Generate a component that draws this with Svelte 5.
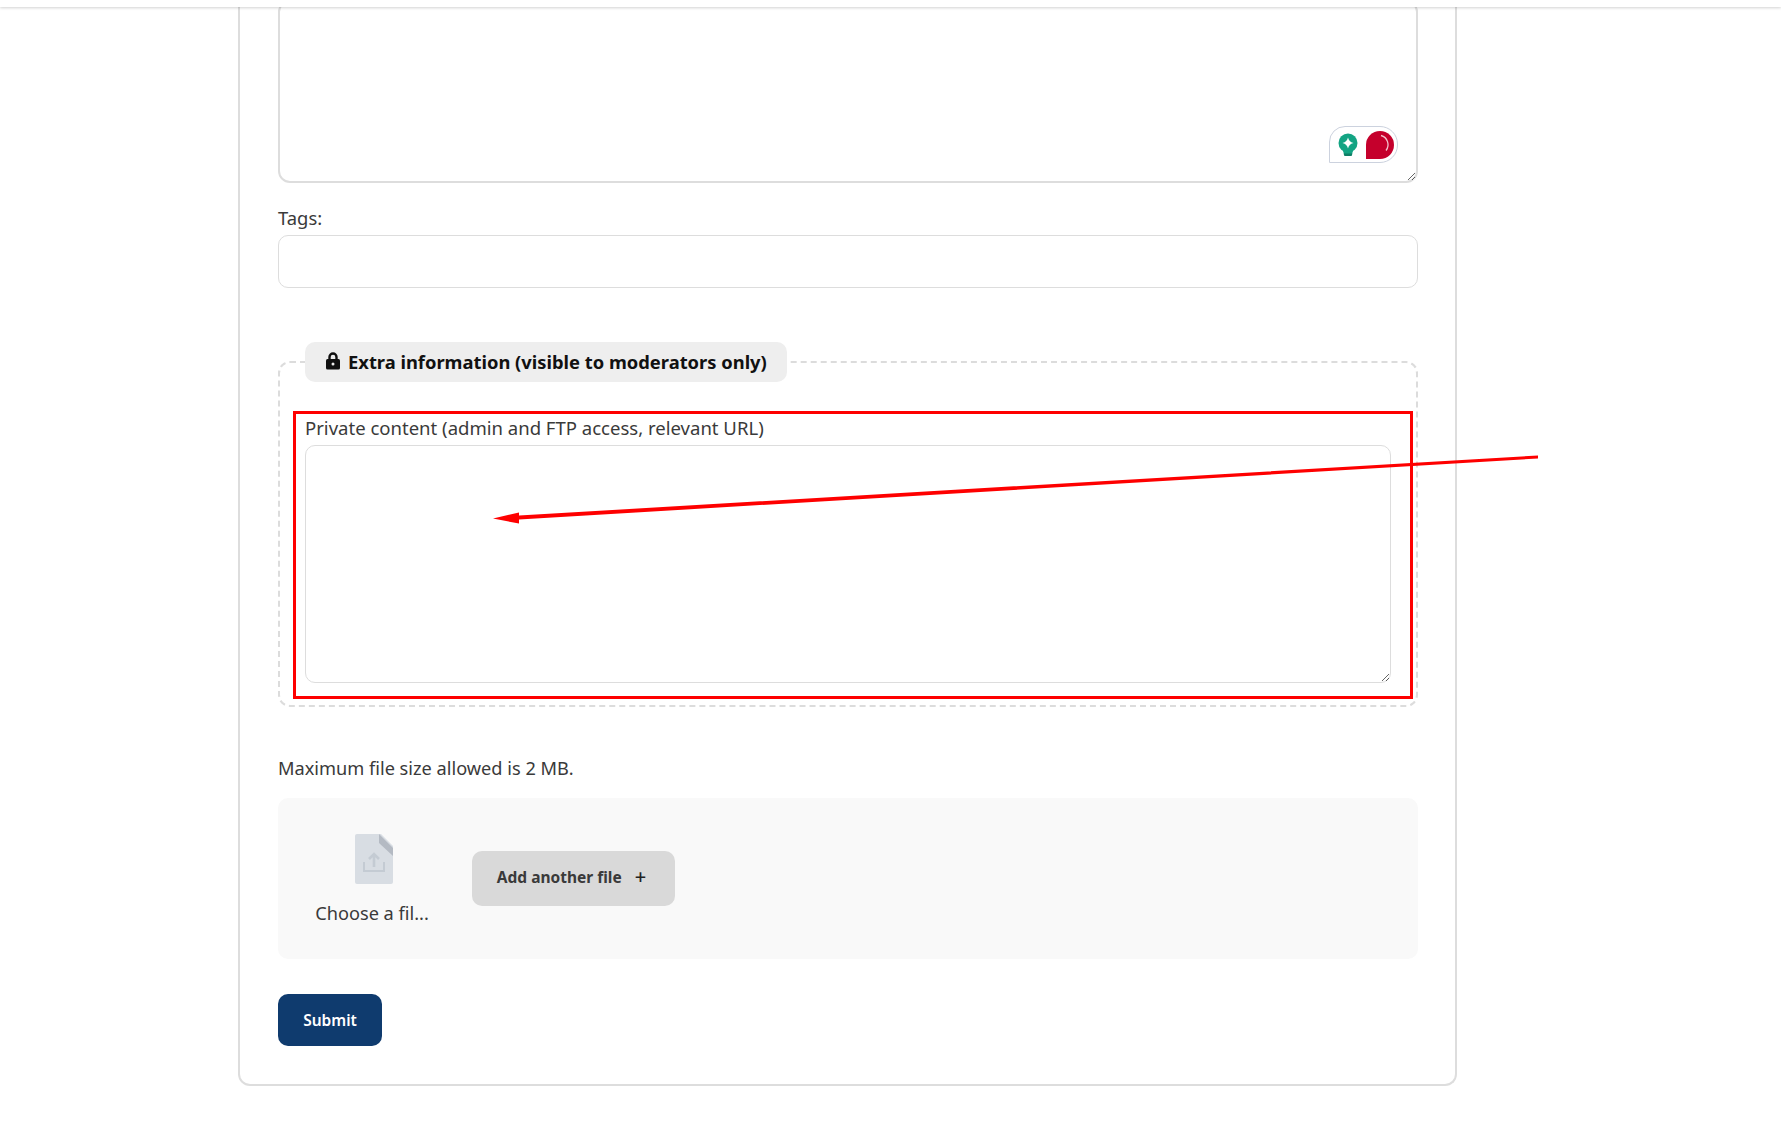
<script>
  const fileLabel = 'Choose a fil...';
</script>

<div class="page">
  <div class="topbar"></div>
  <main class="card">
    <div class="body-wrap">
      <textarea class="body-area"></textarea>
      <div class="badge">
        <svg width="22" height="24" viewBox="0 0 22 24">
          <circle cx="11" cy="10" r="9.5" fill="#13a483" />
          <path d="M11 4.5c.8 3 2.2 4.600 5.500 5.500-3.300.9-4.700 2.500-5.500 5.500-.8-3-2.200-4.600-5.500-5.500 3.300-.9 4.700-2.500 5.500-5.500z" fill="#fff" />
          <path d="M6 18h10l-1.500 4.500h-7z" fill="#13a483" />
          <path d="M6.500 20.500h9l-1 2.500h-7z" fill="#0f7f66" />
        </svg>
        <svg width="28" height="28" viewBox="0 0 28 28">
          <path d="M0 28V14A14 14 0 1 1 14 28z" fill="#c5002c" />
          <path d="M15 4.500a9.500 9.500 0 0 1 5 15" fill="none" stroke="#f3c3ce" stroke-width="1.300" />
        </svg>
      </div>
    </div>

    <label class="tags-label" for="tags">Tags:</label>
    <input id="tags" class="tags" type="text" />

    <fieldset class="extra">
      <legend>
        <svg width="16" height="18" viewBox="0 0 16 18">
          <path d="M4.500 8V5a3.500 3.500 0 0 1 7 0v3" fill="none" stroke="#111" stroke-width="2.400" />
          <rect x="1" y="7" width="14" height="10.500" rx="1.500" fill="#111" />
          <circle cx="8" cy="12" r="1.500" fill="#eee" />
        </svg>
        Extra information (visible to moderators only)
      </legend>
      <label class="private-label" for="private">Private content (admin and FTP access, relevant URL)</label>
      <textarea id="private" class="private"></textarea>
    </fieldset>

    <p class="limit">Maximum file size allowed is 2 MB.</p>

    <section class="drop">
      <div class="file">
        <svg width="38" height="50" viewBox="0 0 38 50">
          <path d="M2 0h24l12 12v36a2 2 0 0 1-2 2H2a2 2 0 0 1-2-2V2a2 2 0 0 1 2-2z" fill="#d8dde3" />
          <path d="M24 0l14 14v8L24 9z" fill="#b4bac3" />
          <path d="M19 33V20M14 25l5-5 5 5" fill="none" stroke="#c4cbd3" stroke-width="2.600" />
          <path d="M9 28v9h20v-9" fill="none" stroke="#c4cbd3" stroke-width="2" />
        </svg>
        <span>{fileLabel}</span>
      </div>
      <button class="add" type="button"><span>Add another file</span><b>+</b></button>
    </section>

    <button class="submit" type="button">Submit</button>
  </main>

  <div class="highlight"></div>
  <svg class="arrow" width="1781" height="1135" viewBox="0 0 1781 1135">
    <path d="M1538 455.500 L519 515.500 L519 512.500 L493 518.500 L519 523.500 L519 519.500 L1538 458.500 Z" fill="#fe0000" />
  </svg>
</div>

<style>
  :global(body) {
    margin: 0;
    background: #fff;
    font-family: "Noto Sans", Lato, sans-serif;
    color: #3a3a3a;
  }
  .page {
    position: relative;
    height: 1135px;
    overflow: hidden;
  }
  .topbar {
    position: absolute;
    inset: 0 0 auto 0;
    height: 7px;
    background: #fff;
    box-shadow: 0 1px 3px rgba(0, 0, 0, 0.18);
    z-index: 2;
  }
  .card {
    box-sizing: border-box;
    display: flex;
    flex-direction: column;
    align-items: flex-start;
    width: 1219px;
    height: 1086px;
    margin-left: 238px;
    padding: 0 38px 0;
    border: 2px solid #ddd;
    border-top: 0;
    border-radius: 0 0 12px 12px;
  }
  .body-wrap {
    position: relative;
    width: 1140px;
    height: 183px;
  }
  textarea, input {
    display: block;
    box-sizing: border-box;
    background: #fff;
    outline: 0;
    margin: 0;
  }
  .body-area {
    width: 100%;
    height: 100%;
    border: 2px solid #ddd;
    border-radius: 12px;
    resize: vertical;
  }
  .badge {
    position: absolute;
    left: 1051px;
    top: 126px;
    box-sizing: border-box;
    width: 69px;
    height: 37px;
    display: flex;
    align-items: center;
    gap: 7px;
    padding-left: 7px;
    background: #fff;
    border: 1px solid #ccd2de;
    border-radius: 16px 18px 18px 0;
  }
  .tags-label {
    margin-top: 24px;
    font-size: 18.4px;
    line-height: 22px;
  }
  .tags {
    width: 1140px;
    height: 53px;
    margin-top: 6px;
    border: 1px solid #ddd;
    border-radius: 10px;
  }
  .extra {
    box-sizing: border-box;
    width: 1140px;
    height: 365px;
    margin: 54px 0 0;
    padding: 0 25px;
    border: 2px dashed #dcdcdc;
    border-radius: 12px;
    min-width: 0;
  }
  legend {
    box-sizing: border-box;
    width: 482px;
    height: 40px;
    padding: 0 0 2px 20px;
    display: flex;
    align-items: center;
    gap: 7px;
    background: #eee;
    border-radius: 10px;
    font-size: 18.35px;
    font-weight: 700;
    color: #111;
    white-space: nowrap;
  }
  .private-label {
    display: block;
    margin-top: 35px;
    font-size: 18.55px;
    line-height: 22px;
  }
  .private {
    width: 1086px;
    height: 238px;
    margin-top: 6px;
    border: 1px solid #ddd;
    border-radius: 10px;
    resize: vertical;
  }
  .limit {
    margin: 50px 0 0;
    font-size: 18.2px;
    line-height: 22px;
  }
  .drop {
    box-sizing: border-box;
    display: flex;
    align-items: center;
    gap: 43px;
    width: 1140px;
    height: 161px;
    margin-top: 19px;
    padding-left: 37px;
    background: #f9f9f9;
    border-radius: 10px;
  }
  .file {
    display: flex;
    flex-direction: column;
    align-items: center;
    gap: 18px;
    width: 114px;
    font-size: 18.2px;
    line-height: 22px;
  }
  .file svg {
    margin: 1px 0 0 3px;
  }
  button {
    border: 0;
    font-family: inherit;
    border-radius: 10px;
  }
  .add {
    display: flex;
    align-items: center;
    justify-content: center;
    gap: 13px;
    width: 203px;
    height: 55px;
    margin-top: -1px;
    padding: 0 4px 3px 0;
    background: #d9d9d9;
    color: #3a3a3a;
    font-size: 15.5px;
    font-weight: 700;
  }
  .add b {
    font-size: 20px;
    line-height: 20px;
    font-weight: 500;
    color: #222;
  }
  .submit {
    width: 104px;
    height: 52px;
    margin-top: 35px;
    background: #0f3b6e;
    color: #fff;
    font-size: 15.5px;
    font-weight: 600;
  }
  .highlight {
    position: absolute;
    left: 293px;
    top: 411px;
    box-sizing: border-box;
    width: 1119.500px;
    height: 288px;
    border: 3px solid #fe0000;
  }
  .arrow {
    position: absolute;
    inset: 0;
    pointer-events: none;
  }
</style>
